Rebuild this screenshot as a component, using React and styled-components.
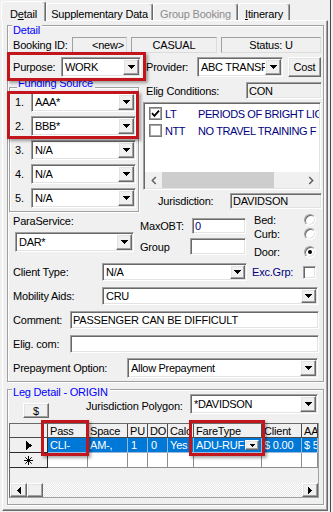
import React from "react";
import styled, { createGlobalStyle, css } from "styled-components";

const GlobalStyle = createGlobalStyle`
  *, *::before, *::after { box-sizing: border-box; }
  html, body { margin: 0; padding: 0; background: #f0f0f0; }
  body {
    font-family: "Liberation Sans", Arial, Helvetica, sans-serif;
    font-size: 11px;
    letter-spacing: -0.2px;
    color: #000;
  }
`;

const place = css`
  flex: none;
  margin-left: ${(p) => p.$ml || 0}px;
  margin-top: ${(p) => p.$mt || 0}px;
  ${(p) => p.$self && `align-self: ${p.$self};`}
`;

const sunken = css`
  border: 1px solid;
  border-color: #a0a0a0 #ffffff #ffffff #a0a0a0;
  box-shadow: inset 1px 1px 0 #696969, inset -1px -1px 0 #e3e3e3;
`;

const raised = css`
  border: 1px solid;
  border-color: #ffffff #696969 #696969 #ffffff;
  box-shadow: inset -1px -1px 0 #a0a0a0, inset 1px 1px 0 #e3e3e3;
  background: #f0f0f0;
`;

const Window = styled.div`
  width: 333px;
  height: 512px;
  overflow: hidden;
  background: #f0f0f0;
  box-shadow: inset -2px 0 0 #f0f0f0, inset -3px 0 0 #4b4b4b;
  display: flex;
  flex-direction: column;
`;

const TabStrip = styled.div`
  position: relative;
  z-index: 2;
  flex: none;
  display: flex;
  align-items: flex-end;
  height: 21px;
  padding-left: 1px;
`;

const Tab = styled.div`
  flex: none;
  width: ${(p) => p.$w}px;
  height: ${(p) => (p.$active ? 20 : 17)}px;
  margin-bottom: ${(p) => (p.$active ? 0 : 1)}px;
  padding-top: ${(p) => (p.$active ? 4 : 3)}px;
  background: #f0f0f0;
  border: 1px solid;
  border-bottom: 0;
  border-color: #ffffff #696969 transparent #ffffff;
  border-radius: 3px 3px 0 0;
  box-shadow: inset -1px 0 0 #a0a0a0;
  display: flex;
  align-items: center;
  justify-content: center;
  white-space: nowrap;
  color: ${(p) => (p.$disabled ? "#8d8d8d" : "#000")};
  u { text-decoration: underline; text-underline-offset: 1px; }
`;

const Panel = styled.div`
  position: relative;
  z-index: 1;
  flex: none;
  margin: -1px 0 0 2px;
  width: 326px;
  height: 491px;
  border: 1px solid;
  border-color: #ffffff #696969 #696969 #ffffff;
  box-shadow: inset -1px -1px 0 #a0a0a0;
  padding: 4px 0 0 4px;
  display: flex;
  flex-direction: column;
`;

const GroupBox = styled.div`
  ${place}
  position: relative;
  width: ${(p) => p.$w}px;
  height: ${(p) => p.$h}px;
  border: 1px solid #a0a0a0;
  box-shadow: inset 1px 1px 0 #ffffff, 1px 1px 0 #ffffff;
  padding-left: ${(p) => p.$pl || 0}px;
  display: flex;
  flex-direction: column;
`;

const GroupTitle = styled.span`
  position: absolute;
  left: ${(p) => p.$left}px;
  top: ${(p) => p.$top}px;
  height: 13px;
  line-height: 13px;
  padding: 0 2px 0 1px;
  background: #f0f0f0;
  color: #0000ff;
  white-space: nowrap;
`;

const Row = styled.div`
  ${place}
  display: flex;
  align-items: ${(p) => p.$align || "center"};
  height: ${(p) => p.$h}px;
  gap: ${(p) => p.$gap || 0}px;
  padding-left: ${(p) => p.$pl || 0}px;
`;

const Label = styled.span`
  ${place}
  width: ${(p) => p.$w}px;
  white-space: nowrap;
  color: ${(p) => p.$color || "#000"};
`;

const BlockLabel = styled.div`
  ${place}
  height: 13px;
  line-height: 13px;
  white-space: nowrap;
`;

const ReadBox = styled.div`
  ${place}
  width: ${(p) => p.$w}px;
  height: 100%;
  background: #f0f0f0;
  ${(p) =>
    p.$deep
      ? sunken
      : css`
          border: 1px solid;
          border-color: #a0a0a0 #dcdcdc #dcdcdc #a0a0a0;
        `}
  display: flex;
  align-items: center;
  justify-content: ${(p) => p.$align || "flex-start"};
  padding: 0 2px;
  white-space: nowrap;
  overflow: hidden;
`;

const TextBox = styled.div`
  ${place}
  ${sunken}
  width: ${(p) => p.$w}px;
  height: 100%;
  background: #ffffff;
  display: flex;
  align-items: center;
  padding: 0 2px;
  white-space: nowrap;
  overflow: hidden;
  color: ${(p) => p.$color || "#000"};
`;

const ComboBox = styled.div`
  ${place}
  ${sunken}
  width: ${(p) => p.$w}px;
  height: ${(p) => p.$h || 20}px;
  background: #ffffff;
  padding: 1px;
  display: flex;
  align-items: stretch;
`;

const ComboText = styled.span`
  flex: 1;
  min-width: 0;
  display: flex;
  align-items: center;
  padding-left: 2px;
  letter-spacing: -0.3px;
  white-space: nowrap;
  overflow: hidden;
`;

const DropBtn = styled.span`
  ${raised}
  flex: none;
  width: ${(p) => p.$w || 16}px;
  display: flex;
  align-items: center;
  justify-content: center;
`;

const Button = styled.div`
  ${place}
  ${raised}
  width: ${(p) => p.$w}px;
  height: ${(p) => p.$h}px;
  display: flex;
  align-items: center;
  justify-content: center;
`;

const Highlight = styled.div`
  ${place}
  position: relative;
  display: flex;
  flex-direction: ${(p) => (p.$col ? "column" : "row")};
  align-items: ${(p) => (p.$col ? "stretch" : "center")};
  &::after {
    content: "";
    position: absolute;
    pointer-events: none;
    z-index: 5;
    top: ${(p) => p.$t}px;
    right: ${(p) => p.$r}px;
    bottom: ${(p) => p.$b}px;
    left: ${(p) => p.$l}px;
    border: 3px solid #c3161c;
    box-shadow: 2px 2px 3px rgba(0, 0, 0, 0.35);
  }
`;

const Middle = styled.div`
  ${place}
  display: flex;
  align-items: flex-start;
`;

const FundList = styled.div`
  display: flex;
  flex-direction: column;
  padding: 4px 0 0 5px;
  width: 126px;
`;

const RightCol = styled.div`
  ${place}
  width: 179px;
  display: flex;
  flex-direction: column;
`;

const ListBox = styled.div`
  ${place}
  ${sunken}
  width: 178px;
  height: 88px;
  background: #ffffff;
  padding: 1px;
  display: flex;
  flex-direction: column;
`;

const ListItems = styled.div`
  flex: 1;
  min-height: 0;
  padding: 1px 0 0 4px;
  overflow: hidden;
`;

const ListItem = styled.div`
  display: flex;
  align-items: center;
  height: 17px;
  white-space: nowrap;
  letter-spacing: -0.4px;
  color: #000080;
`;

const ListCheck = styled.span`
  flex: none;
  width: 13px;
  height: 13px;
  border: 1px solid #7a7a7a;
  box-shadow: inset 0 0 0 1px #a6a6a6;
  background: #ffffff;
  display: flex;
  align-items: center;
  justify-content: center;
  margin-right: 3px;
`;

const Code = styled.span`
  flex: none;
  width: 33px;
`;

const ModernScroll = styled.div`
  flex: none;
  height: 16px;
  display: flex;
  background: #f0f0f0;
`;

const ArrowZone = styled.span`
  flex: none;
  width: 17px;
  display: flex;
  align-items: center;
  justify-content: center;
`;

const ModernThumb = styled.span`
  flex: none;
  width: 112px;
  background: #cdcdcd;
`;

const ModernTrack = styled.span`
  flex: 1;
`;

const ParaSection = styled.div`
  flex: none;
  height: 43px;
  display: flex;
  align-items: flex-start;
`;

const Col = styled.div`
  ${place}
  width: ${(p) => p.$w}px;
  display: flex;
  flex-direction: column;
`;

const Radio = styled.span`
  flex: none;
  width: 12px;
  height: 12px;
  border-radius: 50%;
  background: #ffffff;
  border: 1px solid;
  border-color: #a0a0a0 #ffffff #ffffff #a0a0a0;
  box-shadow: inset 1px 1px 0 #696969, inset -1px -1px 0 #e3e3e3;
  display: flex;
  align-items: center;
  justify-content: center;
  &::after {
    content: "";
    width: 4px;
    height: 4px;
    border-radius: 50%;
    background: #000;
    display: ${(p) => (p.$on ? "block" : "none")};
  }
`;

const CheckBox = styled.span`
  ${place}
  ${sunken}
  width: 13px;
  height: 13px;
  background: #ffffff;
`;

const Grid = styled.div`
  ${place}
  position: relative;
  width: 310px;
  height: 75px;
  border: 1px solid;
  border-color: #696969 #a0a0a0 #a0a0a0 #696969;
  background: #f0f0f0;
  display: flex;
  flex-direction: column;
`;

const GridRow = styled.div`
  flex: none;
  display: grid;
  grid-template-columns: 38px 40px 40px 20px 20px 26px 68px 40px 1fr;
  height: ${(p) => p.$h}px;
`;

const cellLook = {
  corner: css`
    background: #f0f0f0;
    border-color: #4a4a4a;
  `,
  head: css`
    background: #f0f0f0;
    border-color: #4a4a4a;
  `,
  rowhead: css`
    background: #f0f0f0;
    border-color: #2a2a2a;
    justify-content: center;
    padding-left: 0;
  `,
  sel: css`
    background: #0078d7;
    color: #ffffff;
    border-color: #9ab8d8;
  `,
  blank: css`
    background: #ffffff;
    border-color: #8c8c8c;
  `,
};

const Cell = styled.div`
  border-style: solid;
  border-width: 0 1px 1px 0;
  padding-left: ${(p) => (p.$pad != null ? p.$pad : 2)}px;
  display: flex;
  align-items: center;
  white-space: nowrap;
  overflow: hidden;
  min-width: 0;
  ${(p) => cellLook[p.$kind]}
`;

const CellText = styled.span`
  flex: 1;
  min-width: 0;
  overflow: hidden;
`;

const CellDrop = styled.span`
  ${raised}
  flex: none;
  width: 14px;
  height: 10px;
  margin-right: 2px;
  display: flex;
  align-items: center;
  justify-content: center;
`;

const GridEmpty = styled.div`
  flex: 1;
`;

const HScroll = styled.div`
  flex: none;
  height: 14px;
  display: flex;
  background: repeating-conic-gradient(#ffffff 0 25%, #e6e6e6 0 50%) 0 0 / 2px 2px;
`;

const ScrollBtn = styled.span`
  ${raised}
  flex: none;
  width: ${(p) => p.$w}px;
  display: flex;
  align-items: center;
  justify-content: center;
`;

const ScrollFill = styled.span`
  flex: 1;
`;

const GridMark = styled.span`
  position: absolute;
  pointer-events: none;
  z-index: 5;
  left: ${(p) => p.$l}px;
  top: ${(p) => p.$t}px;
  width: ${(p) => p.$w}px;
  height: ${(p) => p.$h}px;
  border: 3px solid #c3161c;
  box-shadow: 2px 2px 3px rgba(0, 0, 0, 0.35);
`;

/* ---------- drawings ---------- */

const Caret = ({ w = 7, h = 4 }) => (
  <svg width={w} height={h} viewBox={`0 0 ${w} ${h}`} shapeRendering="crispEdges" aria-hidden="true">
    <path d={`M0 0H${w}L${w / 2} ${h}Z`} fill="#000" />
  </svg>
);

const SideTri = ({ dir }) => (
  <svg width="4" height="7" viewBox="0 0 4 7" shapeRendering="crispEdges" aria-hidden="true">
    <path d={dir === "left" ? "M4 0V7L0 3.5Z" : "M0 0V7L4 3.5Z"} fill="#000" />
  </svg>
);

const Chevron = ({ dir }) => (
  <svg width="6" height="9" viewBox="0 0 6 9" aria-hidden="true">
    <path
      d={dir === "left" ? "M4.8 1L1.3 4.5L4.8 8" : "M1.2 1L4.7 4.5L1.2 8"}
      fill="none"
      stroke="#606060"
      strokeWidth="1.5"
    />
  </svg>
);

const Tick = () => (
  <svg width="9" height="9" viewBox="0 0 9 9" aria-hidden="true">
    <path d="M1 4.2L3.4 6.8L8 1.6" fill="none" stroke="#000" strokeWidth="1.8" />
  </svg>
);

const Pointer = () => (
  <svg width="6" height="9" viewBox="0 0 6 9" shapeRendering="crispEdges" aria-hidden="true">
    <path d="M0 0L6 4.5L0 9Z" fill="#000" />
  </svg>
);

const Star = () => (
  <svg width="9" height="9" viewBox="0 0 9 9" aria-hidden="true">
    <path d="M4.5 0V9M0 4.5H9M1.3 1.3L7.7 7.7M7.7 1.3L1.3 7.7" stroke="#000" strokeWidth="1" />
  </svg>
);

const Combo = ({ value, h = 20, btnW = 16, ...rest }) => (
  <ComboBox $h={h} {...rest}>
    <ComboText>{value}</ComboText>
    <DropBtn $w={btnW}>
      <Caret />
    </DropBtn>
  </ComboBox>
);

const FundRow = ({ n, value, mt }) => (
  <Row $h={20} $mt={mt}>
    <Label $w={16}>{n}.</Label>
    <Combo $w={105} value={value} />
  </Row>
);

const columns = ["Pass", "Space", "PU", "DO", "Calc", "FareType", "Client", "AA"];

export default function App() {
  return (
    <>
      <GlobalStyle />
      <Window>
        <TabStrip>
          <Tab $active $w={45}>
            D<u>e</u>tail
          </Tab>
          <Tab $w={107}>Supplementary Data</Tab>
          <Tab $w={85} $disabled>
            Group Booking
          </Tab>
          <Tab $w={52}>
            <u>I</u>tinerary
          </Tab>
        </TabStrip>

        <Panel>
          {/* ---------------- Detail ---------------- */}
          <GroupBox $w={317} $h={357} $pl={5}>
            <GroupTitle $left={4} $top={-2}>
              Detail
            </GroupTitle>

            <Row $h={16} $mt={11} $gap={4}>
              <Label $w={55}>Booking ID:</Label>
              <ReadBox $w={55} $align="flex-end">
                &lt;new&gt;
              </ReadBox>
              <ReadBox $w={86} $align="center">
                CASUAL
              </ReadBox>
              <ReadBox $w={100} $align="center">
                Status: U
              </ReadBox>
            </Row>

            <Row $h={20} $mt={4}>
              <Highlight $t={-5} $r={-5} $b={-4} $l={-6}>
                <Label $w={48}>Purpose:</Label>
                <Combo $w={80} value="WORK" />
              </Highlight>
              <Label $w={51} $ml={5}>
                Provider:
              </Label>
              <Combo $w={86} value="ABC TRANSF" />
              <Button $w={33} $h={20} $ml={5}>
                Cost
              </Button>
            </Row>

            <Middle $mt={5}>
              <GroupBox $w={130} $h={125} $mt={5} $ml={-4}>
                <GroupTitle $left={7} $top={-11}>
                  Funding Source
                </GroupTitle>
                <FundList>
                  <Highlight $col $t={-1} $r={-3} $b={-3} $l={-8}>
                    <FundRow n={1} value="AAA*" />
                    <FundRow n={2} value="BBB*" mt={4} />
                  </Highlight>
                  <FundRow n={3} value="N/A" mt={4} />
                  <FundRow n={4} value="N/A" mt={4} />
                  <FundRow n={5} value="N/A" mt={4} />
                </FundList>
              </GroupBox>

              <RightCol $ml={4}>
                <Row $h={17} $pl={3}>
                  <Label $w={100}>Elig Conditions:</Label>
                  <ReadBox $w={76} $deep>
                    CON
                  </ReadBox>
                </Row>
                <ListBox $mt={3}>
                  <ListItems>
                    <ListItem>
                      <ListCheck>
                        <Tick />
                      </ListCheck>
                      <Code>LT</Code>
                      <span>PERIODS OF BRIGHT LIG</span>
                    </ListItem>
                    <ListItem>
                      <ListCheck />
                      <Code>NTT</Code>
                      <span>NO TRAVEL TRAINING F</span>
                    </ListItem>
                  </ListItems>
                  <ModernScroll>
                    <ArrowZone>
                      <Chevron dir="left" />
                    </ArrowZone>
                    <ModernThumb />
                    <ModernTrack />
                    <ArrowZone>
                      <Chevron dir="right" />
                    </ArrowZone>
                  </ModernScroll>
                </ListBox>
                <Row $h={16} $mt={3} $pl={15}>
                  <Label $w={72}>Jurisdiction:</Label>
                  <ReadBox $w={92} $deep>
                    DAVIDSON
                  </ReadBox>
                </Row>
              </RightCol>
            </Middle>

            <ParaSection>
              <Col $w={127}>
                <BlockLabel $mt={3}>ParaService:</BlockLabel>
                <Combo $w={119} $ml={2} $mt={4} value="DAR*" />
              </Col>
              <Col $w={106}>
                <Row $h={16} $mt={6}>
                  <Label $w={52}>MaxOBT:</Label>
                  <TextBox $w={54} $color="#000080">
                    0
                  </TextBox>
                </Row>
                <Row $h={17} $mt={4}>
                  <Label $w={50}>Group</Label>
                  <TextBox $w={56} />
                </Row>
              </Col>
              <Col $w={63} $ml={8}>
                <Row $h={15}>
                  <Label $w={50}>Bed:</Label>
                  <Radio />
                </Row>
                <Row $h={14}>
                  <Label $w={50}>Curb:</Label>
                  <Radio />
                </Row>
                <Row $h={15} $mt={3}>
                  <Label $w={50}>Door:</Label>
                  <Radio $on />
                </Row>
              </Col>
            </ParaSection>

            <Row $h={18} $mt={8}>
              <Label $w={89}>Client Type:</Label>
              <Combo $w={145} h={18} btnW={15} value="N/A" />
              <Label $w={51} $ml={5} $color="#000080">
                Exc.Grp:
              </Label>
              <CheckBox />
            </Row>

            <Row $h={18} $mt={6}>
              <Label $w={89}>Mobility Aids:</Label>
              <Combo $w={216} h={18} btnW={15} value="CRU" />
            </Row>

            <Row $h={18} $mt={6}>
              <Label $w={57}>Comment:</Label>
              <TextBox $w={249}>PASSENGER CAN BE DIFFICULT</TextBox>
            </Row>

            <Row $h={18} $mt={6}>
              <Label $w={57}>Elig. com:</Label>
              <TextBox $w={249} />
            </Row>

            <Row $h={20} $mt={5}>
              <Label $w={114}>Prepayment Option:</Label>
              <Combo $w={191} value="Allow Prepayment" />
            </Row>
          </GroupBox>

          {/* ---------------- Leg Detail ---------------- */}
          <GroupBox $w={317} $h={116} $mt={7}>
            <GroupTitle $left={4} $top={-4}>
              Leg Detail - ORIGIN
            </GroupTitle>

            <Row $h={24} $mt={4} $align="flex-start">
              <Button $w={26} $h={15} $ml={15} $self="flex-end">
                $
              </Button>
              <Label $w={104} $ml={37} $self="center">
                Jurisdiction Polygon:
              </Label>
              <Combo $w={128} value="*DAVIDSON" />
            </Row>

            <Grid $mt={5} $ml={1}>
              <GridRow $h={14}>
                <Cell $kind="corner" />
                {columns.map((c) => (
                  <Cell $kind="head" key={c}>
                    {c}
                  </Cell>
                ))}
              </GridRow>
              <GridRow $h={15}>
                <Cell $kind="rowhead">
                  <Pointer />
                </Cell>
                <Cell $kind="sel">CLI-</Cell>
                <Cell $kind="sel">AM-,</Cell>
                <Cell $kind="sel" $pad={3}>
                  1
                </Cell>
                <Cell $kind="sel" $pad={3}>
                  0
                </Cell>
                <Cell $kind="sel">Yes</Cell>
                <Cell $kind="sel">
                  <CellText>ADU-RUF</CellText>
                  <CellDrop>
                    <Caret w={5} h={3} />
                  </CellDrop>
                </Cell>
                <Cell $kind="sel">$ 0.00</Cell>
                <Cell $kind="sel">$ 5</Cell>
              </GridRow>
              <GridRow $h={15}>
                <Cell $kind="rowhead">
                  <Star />
                </Cell>
                {columns.map((c) => (
                  <Cell $kind="blank" key={c} />
                ))}
              </GridRow>
              <GridEmpty />
              <HScroll>
                <ScrollBtn $w={17}>
                  <SideTri dir="left" />
                </ScrollBtn>
                <ScrollBtn $w={16} />
                <ScrollFill />
                <ScrollBtn $w={16}>
                  <SideTri dir="right" />
                </ScrollBtn>
              </HScroll>
              <GridMark $l={31} $t={-4} $w={48} $h={36} />
              <GridMark $l={179} $t={-4} $w={76} $h={36} />
            </Grid>
          </GroupBox>
        </Panel>
      </Window>
    </>
  );
}
